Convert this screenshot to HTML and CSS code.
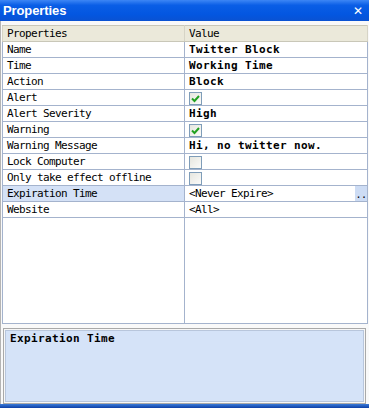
FILE: index.html
```html
<!DOCTYPE html>
<html lang="en">
<head>
    <meta charset="UTF-8">
    <title>Properties</title>
    <link rel="stylesheet" href="styles.css">
</head>
<body>
    <div class="window">
        <div class="titlebar">
            <span class="title">Properties</span>
            <span class="close">&#x2715;</span>
        </div>

        <div class="grid-wrap">
            <table class="grid">
                <tr class="head">
                    <td class="name-col">Properties</td>
                    <td>Value</td>
                </tr>
                <tr><td>Name</td><td class="bold">Twitter Block</td></tr>
                <tr><td>Time</td><td class="bold">Working Time</td></tr>
                <tr><td>Action</td><td class="bold">Block</td></tr>
                <tr><td>Alert</td><td><span class="check on"></span></td></tr>
                <tr><td>Alert Severity</td><td class="bold">High</td></tr>
                <tr><td>Warning</td><td><span class="check on"></span></td></tr>
                <tr><td>Warning Message</td><td class="bold">Hi, no twitter now.</td></tr>
                <tr><td>Lock Computer</td><td><span class="check"></span></td></tr>
                <tr><td>Only take effect offline</td><td><span class="check"></span></td></tr>
                <tr class="selected">
                    <td>Expiration Time</td>
                    <td class="with-btn">&lt;Never Expire&gt;<span class="dots">..</span></td>
                </tr>
                <tr><td>Website</td><td>&lt;All&gt;</td></tr>
                <tr class="filler"><td></td><td></td></tr>
            </table>
        </div>

        <div class="desc">
            <div class="desc-inner">Expiration Time</div>
        </div>
        <div class="bottom"></div>
    </div>
</body>
</html>
```

FILE: styles.css
```css
body {
    margin: 0;
    background: #ffffff;
}

.window {
    width: 369px;
    height: 408px;
    box-sizing: border-box;
    display: flex;
    flex-direction: column;
    background: #f9f9f9;
    border-left: 1px solid #b4b4b4;
}

.titlebar {
    height: 21px;
    margin-left: -1px;
    display: flex;
    align-items: center;
    justify-content: space-between;
    padding: 0 6px 0 3px;
    background: linear-gradient(#3d86f5 0%, #0a5ee6 25%, #0356e0 70%, #0a52d2 100%);
    color: white;
}

.title {
    font-family: "Liberation Sans", Arial, sans-serif;
    font-weight: bold;
    font-size: 13px;
    letter-spacing: -0.1px;
}

.close {
    font-family: "DejaVu Sans", sans-serif;
    font-weight: bold;
    font-size: 12px;
}

.grid-wrap {
    padding: 4px 1px 0 1px;
    height: 299px;
    box-sizing: content-box;
}

.grid {
    width: 366px;
    height: 299px;
    border-collapse: collapse;
    table-layout: fixed;
    background: white;
    border: 1px solid #a4b3cd;
    font-family: "DejaVu Sans Mono", monospace;
    font-size: 11px;
    letter-spacing: -0.62px;
    color: #000;
}

.grid td {
    height: 15px;
    padding: 0 0 0 4px;
    border: 1px solid #a4b3cd;
    white-space: nowrap;
    overflow: hidden;
    line-height: 15px;
    vertical-align: middle;
}

.grid td.name-col {
    width: 177px;
}

.grid .head td {
    background: #ebe9da;
    border-color: #c9c7b8 #d6d4c6;
}

.grid .bold {
    font-weight: bold;
    letter-spacing: 0.38px;
}

.grid .selected td:first-child {
    background: #d4e1f6;
}

.with-btn {
    position: relative;
}

.dots {
    position: absolute;
    right: 0;
    top: 0;
    width: 12px;
    height: 15px;
    background: #cddcf4;
    font-size: 10px;
    line-height: 17px;
    text-align: center;
}

.grid .filler td {
    height: auto;
    border-bottom: none;
}

.check {
    display: inline-block;
    width: 11px;
    height: 11px;
    margin-top: 2px;
    vertical-align: top;
    border: 1px solid #7f9db9;
    background: linear-gradient(135deg, #e6e6df, #fbfbf9);
}

.check.on {
    background-image: url("data:image/svg+xml;utf8,<svg xmlns='http://www.w3.org/2000/svg' width='11' height='11'><path d='M2 5.5 L4.5 8 L9 3' stroke='%2321a121' stroke-width='2' fill='none'/></svg>"),
        linear-gradient(135deg, #e6e6df, #fbfbf9);
}

.desc {
    margin: 4px 3px 0 2px;
    height: 72px;
    border: 1px solid #a9a9a9;
    padding: 1px;
    background: #f7f7f7;
}

.desc-inner {
    height: 100%;
    box-sizing: border-box;
    border: 1px solid #b8c6dc;
    background: #d5e3f8;
    padding: 1px 0 0 4px;
    font-family: "DejaVu Sans Mono", monospace;
    font-size: 11px;
    font-weight: bold;
    letter-spacing: 0.38px;
}

.bottom {
    margin-top: auto;
    height: 4px;
    margin-left: -1px;
    background: linear-gradient(#3a7ad8, #0c3fa6);
}
```
